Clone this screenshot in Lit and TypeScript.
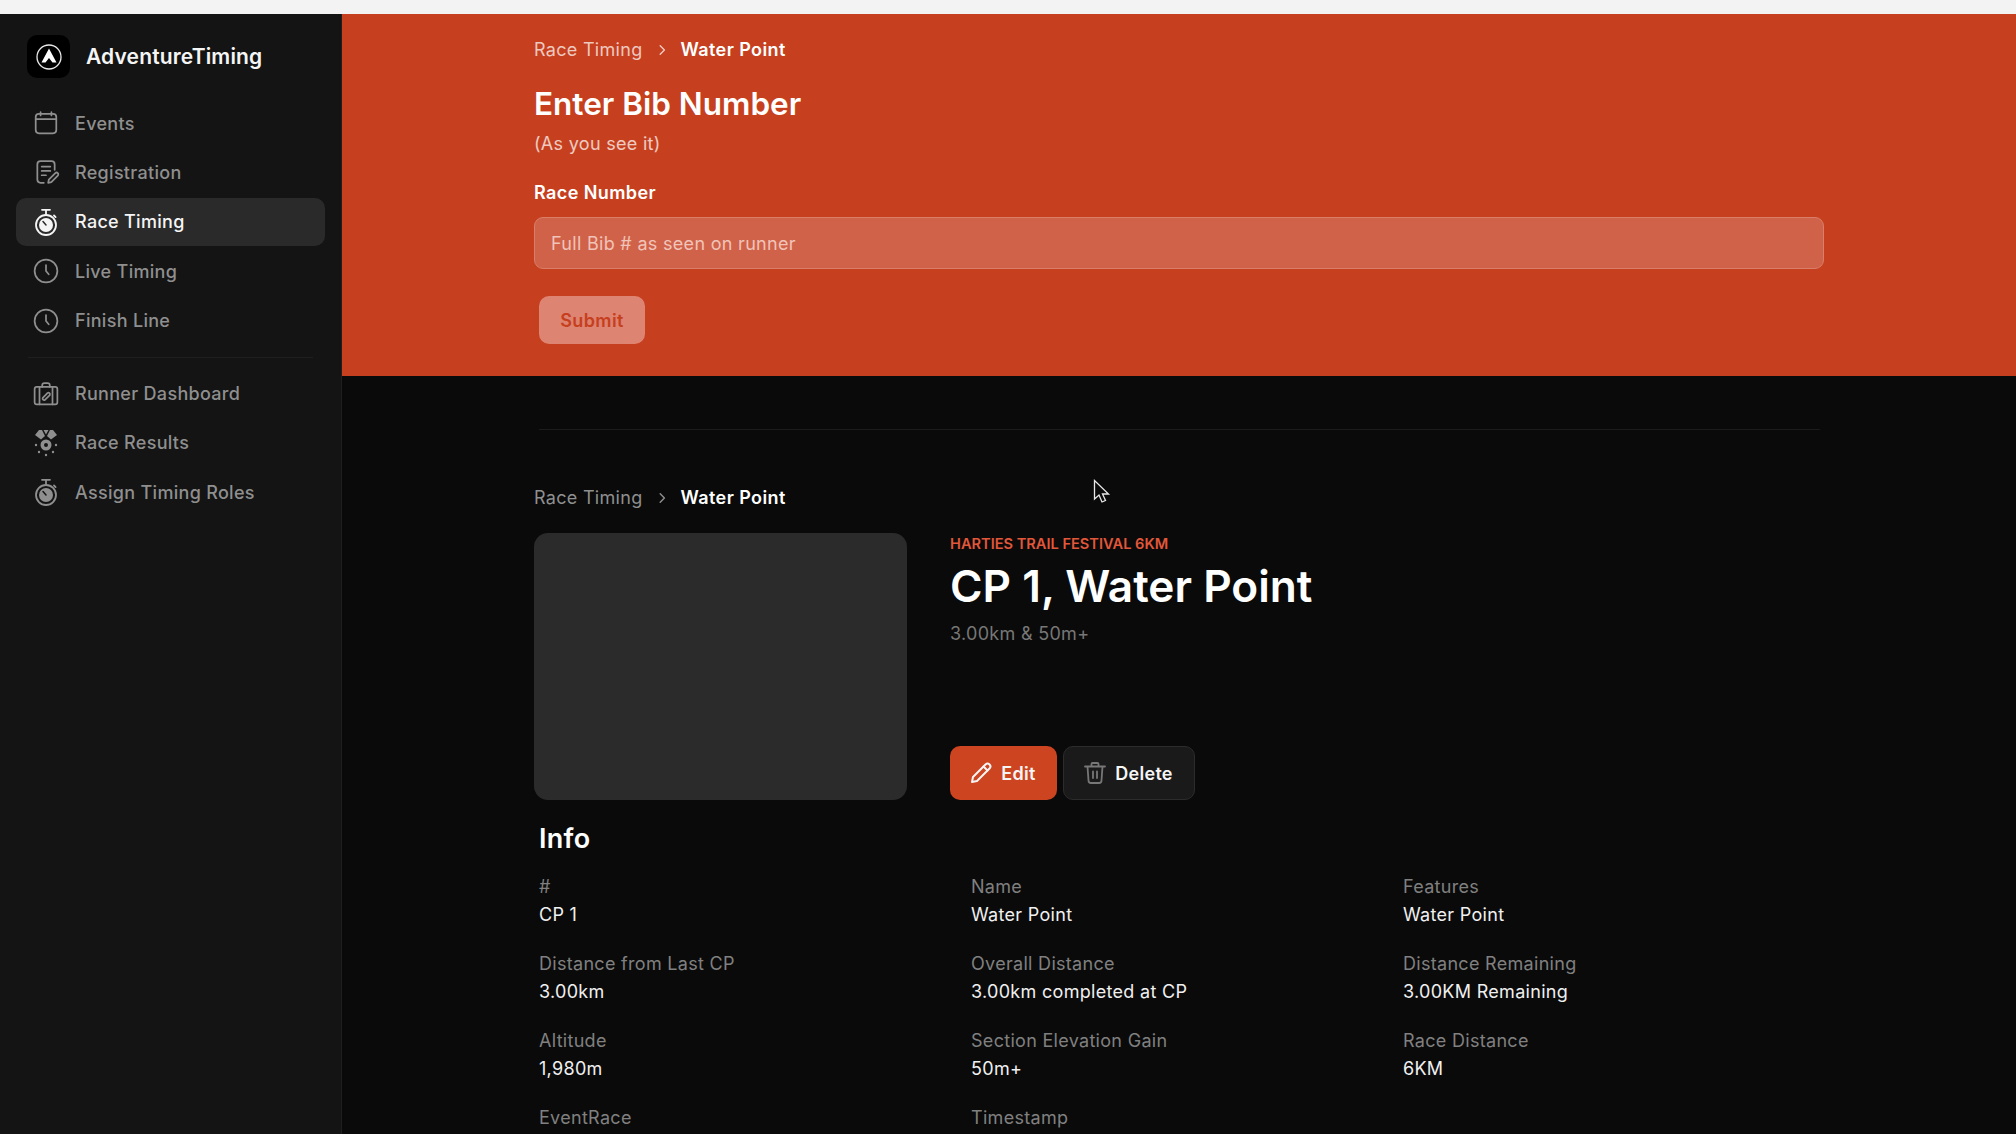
import { LitElement, html, css, svg } from 'lit';
import { customElement } from 'lit/decorators.js';

const stroke = (body: unknown) => html`<svg class="ico" viewBox="0 0 24 24" fill="none" stroke="currentColor" stroke-width="1.6" stroke-linecap="round" stroke-linejoin="round">${body}</svg>`;

const stopwatch = (hand: string) => html`<svg class="ico" viewBox="0 0 26 26" fill="none" stroke="currentColor" stroke-width="1.800" stroke-linecap="round"><path d="M9 .8h8M13 .8V5M21 6.500l1.600 1.600"/><circle cx="13" cy="16" r="10"/><circle cx="13" cy="16" r="7" fill="currentColor" stroke="none"/><path d="M13 16l-3-3.500" stroke="${hand}" stroke-width="1.500"/></svg>`;

const icons: Record<string, unknown> = {
  calendar: stroke(svg`<rect x="2.5" y="3.5" width="19" height="18" rx="3"/><path d="M2.5 8.5h19M7 2v3M17 2v3"/>`),
  notes: stroke(svg`<path d="M20 10V5a3 3 0 0 0-3-3H7a3 3 0 0 0-3 3v14a3 3 0 0 0 3 3h3"/><path d="M8 7h8M8 11h8M8 15h4"/><path d="M14 22l.6-3 6-6a1.6 1.6 0 0 1 2.3 2.3l-6 6z"/>`),
  watchOn: stopwatch('#2a2a2a'),
  watch: stopwatch('#141414'),
  clock: stroke(svg`<circle cx="12" cy="12" r="10.5"/><path d="M12 6.500V12l2.500 3"/>`),
  case: stroke(svg`<rect x="1.5" y="5.5" width="21" height="16" rx="2"/><path d="M6 5.500v16M18 5.500v16M8.500 5.500V4a2 2 0 0 1 2-2h3a2 2 0 0 1 2 2v1.500"/><path d="M9 15.500l4.500-4.500a1.500 1.500 0 0 1 2 2L11 17.500a1.500 1.500 0 0 1-2-2z"/>`),
  medal: html`<svg class="ico" viewBox="0 0 26 26" fill="currentColor">
    <path d="M2 5l4-5h3l3 6-4 3.500zM24 5l-4-5h-3l-3 6 4 3.500zM10.500 0h5L13 4.500z"/>
    <path fill-rule="evenodd" d="M13 9.500a5.500 5.500 0 1 1 0 11 5.500 5.500 0 0 1 0-11zm0 3.500a2 2 0 1 0 0 4 2 2 0 0 0 0-4z"/>
    <circle cx="3" cy="15" r="1.200"/><circle cx="23" cy="15" r="1.200"/><circle cx="13" cy="25" r="1.200"/>
    <circle cx="6" cy="22" r="1.200"/><circle cx="20" cy="22" r="1.200"/>
  </svg>`,
};

const navTop = [
  { label: 'Events', icon: 'calendar' },
  { label: 'Registration', icon: 'notes' },
  { label: 'Race Timing', icon: 'watchOn', active: true },
  { label: 'Live Timing', icon: 'clock' },
  { label: 'Finish Line', icon: 'clock' },
];

const navBottom = [
  { label: 'Runner Dashboard', icon: 'case' },
  { label: 'Race Results', icon: 'medal' },
  { label: 'Assign Timing Roles', icon: 'watch' },
];

const info = [
  ['#', 'CP 1'],
  ['Name', 'Water Point'],
  ['Features', 'Water Point'],
  ['Distance from Last CP', '3.00km'],
  ['Overall Distance', '3.00km completed at CP'],
  ['Distance Remaining', '3.00KM Remaining'],
  ['Altitude', '1,980m'],
  ['Section Elevation Gain', '50m+'],
  ['Race Distance', '6KM'],
  ['EventRace', ''],
  ['Timestamp', ''],
];

@customElement('app-root')
export class AppRoot extends LitElement {
  // --- render

  navRow(item: { label: string; icon: string; active?: boolean }) {
    return html`<a class="nav-row ${item.active ? 'active' : ''}">${icons[item.icon]}<span>${item.label}</span></a>`;
  }

  crumbs() {
    return html`<div class="crumbs">
      <span>Race Timing</span>
      <svg class="chev" viewBox="0 0 10 10" fill="none" stroke="currentColor" stroke-width="1.2" stroke-linecap="round" stroke-linejoin="round"><path d="M3.500 1.500L7 5 3.500 8.500"/></svg>
      <b>Water Point</b>
    </div>`;
  }

  render() {
    return html`
      <div class="topbar"></div>
      <div class="shell">
        <aside class="sidebar">
          <div class="brand">
            <div class="logo">
              <svg viewBox="0 0 26 26" width="26" height="26" fill="none" stroke="#e8e8e8">
                <circle cx="13" cy="13" r="12" stroke-width="1.300"/>
                <path d="M13 4.500L20.500 18.500H16.500L13 14 9.500 18.500H5.500z" fill="#fff" stroke="none"/>
              </svg>
            </div>
            <span>AdventureTiming</span>
          </div>
          <nav class="nav">${navTop.map((i) => this.navRow(i))}</nav>
          <div class="nav-sep"></div>
          <nav class="nav">${navBottom.map((i) => this.navRow(i))}</nav>
        </aside>
        <main class="main">
          <section class="hero">
            ${this.crumbs()}
            <h2>Enter Bib Number</h2>
            <p class="sub">(As you see it)</p>
            <label class="field-label">Race Number</label>
            <div class="input">Full Bib # as seen on runner</div>
            <button class="submit">Submit</button>
          </section>
          <section class="content">
            <div class="rule"></div>
            ${this.crumbs()}
            <div class="head">
              <div class="photo"></div>
              <div class="head-text">
                <div class="eyebrow">HARTIES TRAIL FESTIVAL 6KM</div>
                <h1>CP 1, Water Point</h1>
                <div class="meta">3.00km &amp; 50m+</div>
                <div class="actions">
                  <button class="btn edit">
                    <svg class="btn-ico" viewBox="0 0 24 24" fill="none" stroke="currentColor" stroke-width="2" stroke-linecap="round" stroke-linejoin="round"><path d="M3 21l1-5L16.500 3.500a2.800 2.800 0 0 1 4 4L8 20z"/><path d="M14.500 5.500l4 4"/></svg>
                    Edit
                  </button>
                  <button class="btn del">
                    <svg class="btn-ico" viewBox="0 0 24 24" fill="none" stroke="#777" stroke-width="1.800" stroke-linecap="round" stroke-linejoin="round"><path d="M2 5.500h20M8.500 5V3a1 1 0 0 1 1-1h5a1 1 0 0 1 1 1v2M4.500 5.500l1 14a2.500 2.500 0 0 0 2.500 2.500h8a2.500 2.500 0 0 0 2.500-2.500l1-14M10 10.500v6.500M14 10.500v6.500"/></svg>
                    Delete
                  </button>
                </div>
              </div>
            </div>
            <h3>Info</h3>
            <div class="grid">
              ${info.map(([k, v]) => html`<div class="cell"><div class="k">${k}</div>${v ? html`<div class="v">${v}</div>` : ''}</div>`)}
            </div>
          </section>
        </main>
      </div>
      <svg class="cursor" width="18" height="26" viewBox="0 0 18 26">
        <path d="M1.500 1.500V20l4.500-4 3 7 3.500-1.500-3-6.500h6z" fill="#0a0a0a" stroke="#e8e8e8" stroke-width="1.300"/>
      </svg>
    `;
  }

  // --- styles

  static styles = css`
    :host {
      background: #0a0a0a;
      display: block;
      font-family: Inter, 'Liberation Sans', sans-serif;
      height: 1134px;
      letter-spacing: 0.3px;
      overflow: hidden;
      position: relative;
      width: 2016px;
    }

    .topbar {
      background: #f3f3f3;
      height: 14px;
    }

    .shell {
      display: flex;
      height: 1120px;
    }

    .sidebar {
      background: #141414;
      border-right: 1px solid #1f1f1f;
      box-sizing: border-box;
      flex: 0 0 342px;
      padding: 21px 16px 0;
    }

    .brand {
      align-items: center;
      color: #f5f5f5;
      display: flex;
      font-size: 21px;
      font-weight: 600;
      gap: 16px;
      letter-spacing: 0.15px;
      margin: 0 0 21px 11px;
    }

    .logo {
      align-items: center;
      background: #000;
      border-radius: 10px;
      display: flex;
      height: 43px;
      justify-content: center;
      width: 43px;
    }

    .nav {
      display: flex;
      flex-direction: column;
      gap: 1.400px;
    }

    .nav-row {
      align-items: center;
      border-radius: 10px;
      color: #8f8f8f;
      display: flex;
      font-size: 18px;
      font-weight: 500;
      gap: 16px;
      height: 48px;
      padding-left: 17px;
    }

    .nav-row.active {
      background: #2a2a2a;
      color: #f5f5f5;
    }

    .ico {
      flex: none;
      height: 26px;
      overflow: visible;
      width: 26px;
    }

    .nav-sep {
      background: #1f1f1f;
      height: 1px;
      margin: 12px 12px;
    }

    .main {
      flex: 1;
      min-width: 0;
    }

    .hero {
      background: #c63f1e;
      box-sizing: border-box;
      color: #fff;
      height: 362px;
      padding: 24px 192px 0;
    }

    .crumbs {
      align-items: center;
      color: #8f8f8f;
      display: flex;
      font-size: 18px;
      gap: 13px;
      line-height: 24px;
    }

    .hero .crumbs {
      color: rgba(255, 255, 255, 0.72);
    }

    .crumbs b {
      color: #fff;
      font-weight: 600;
      letter-spacing: 0.4px;
    }

    .chev {
      height: 12px;
      width: 12px;
    }

    .hero h2 {
      font-size: 31.500px;
      font-weight: 600;
      letter-spacing: 0;
      line-height: 40px;
      margin: 22px 0 0;
    }

    .sub {
      font-size: 18px;
      line-height: 24px;
      margin: 8px 0 0;
      opacity: 0.72;
    }

    .field-label {
      display: block;
      font-size: 18px;
      font-weight: 600;
      letter-spacing: 0.4px;
      line-height: 24px;
      margin-top: 25px;
    }

    .input {
      background: #d0624a;
      border: 1px solid #d97e68;
      border-radius: 9px;
      box-sizing: border-box;
      color: #f0c4b8;
      font-size: 18px;
      height: 52px;
      line-height: 51px;
      margin-top: 12px;
      padding-left: 16px;
    }

    .submit {
      background: #de8472;
      border: 0;
      border-radius: 10px;
      color: #c63f1e;
      display: block;
      font: 600 18px Inter, sans-serif;
      height: 48px;
      letter-spacing: 0.4px;
      margin: 27px 0 0 5px;
      width: 106px;
    }

    .content {
      color: #8a8a8a;
      padding: 53px 192px 0;
    }

    .rule {
      background: #1c1c1c;
      height: 1px;
      margin: 0 4px 56px 5px;
    }

    .head {
      display: flex;
      gap: 43px;
      margin-top: 23px;
    }

    .photo {
      background: #2b2b2b;
      border-radius: 14px;
      flex: 0 0 373px;
      height: 267px;
    }

    .head-text {
      display: flex;
      flex-direction: column;
      min-height: 267px;
    }

    .eyebrow {
      color: #e2573a;
      font-size: 14.600px;
      font-weight: 600;
      letter-spacing: 0;
      line-height: 18px;
      margin-top: 2px;
    }

    h1 {
      color: #fff;
      font-size: 44.200px;
      font-weight: 600;
      letter-spacing: 0;
      line-height: 54px;
      margin: 6px 0 0;
    }

    .meta {
      color: #777;
      font-size: 18px;
      line-height: 24px;
      margin-top: 9px;
    }

    .actions {
      display: flex;
      gap: 6px;
      margin-top: auto;
    }

    .btn {
      align-items: center;
      border-radius: 10px;
      color: #f5f5f5;
      display: flex;
      font: 600 18px Inter, sans-serif;
      gap: 8px;
      height: 54px;
      justify-content: center;
      letter-spacing: 0.3px;
      padding: 0 2px 0 0;
    }

    .btn-ico {
      height: 24px;
      width: 24px;
    }

    .edit {
      background: #cd4420;
      border: 0;
      width: 107px;
    }

    .del {
      background: #1a1a1a;
      border: 1px solid #2c2c2c;
      width: 132px;
    }

    h3 {
      color: #fff;
      font-size: 27px;
      font-weight: 600;
      letter-spacing: 0.3px;
      line-height: 36px;
      margin: 21px 0 0 5px;
    }

    .grid {
      display: grid;
      grid-template-columns: repeat(3, 432px);
      margin: 16px 0 0 5px;
      row-gap: 21px;
    }

    .k {
      color: #808080;
      font-size: 18px;
      line-height: 28px;
    }

    .v {
      color: #f0f0f0;
      font-size: 18px;
      line-height: 28px;
    }

    .cursor {
      left: 1093px;
      position: absolute;
      top: 479px;
    }
  `;
}
